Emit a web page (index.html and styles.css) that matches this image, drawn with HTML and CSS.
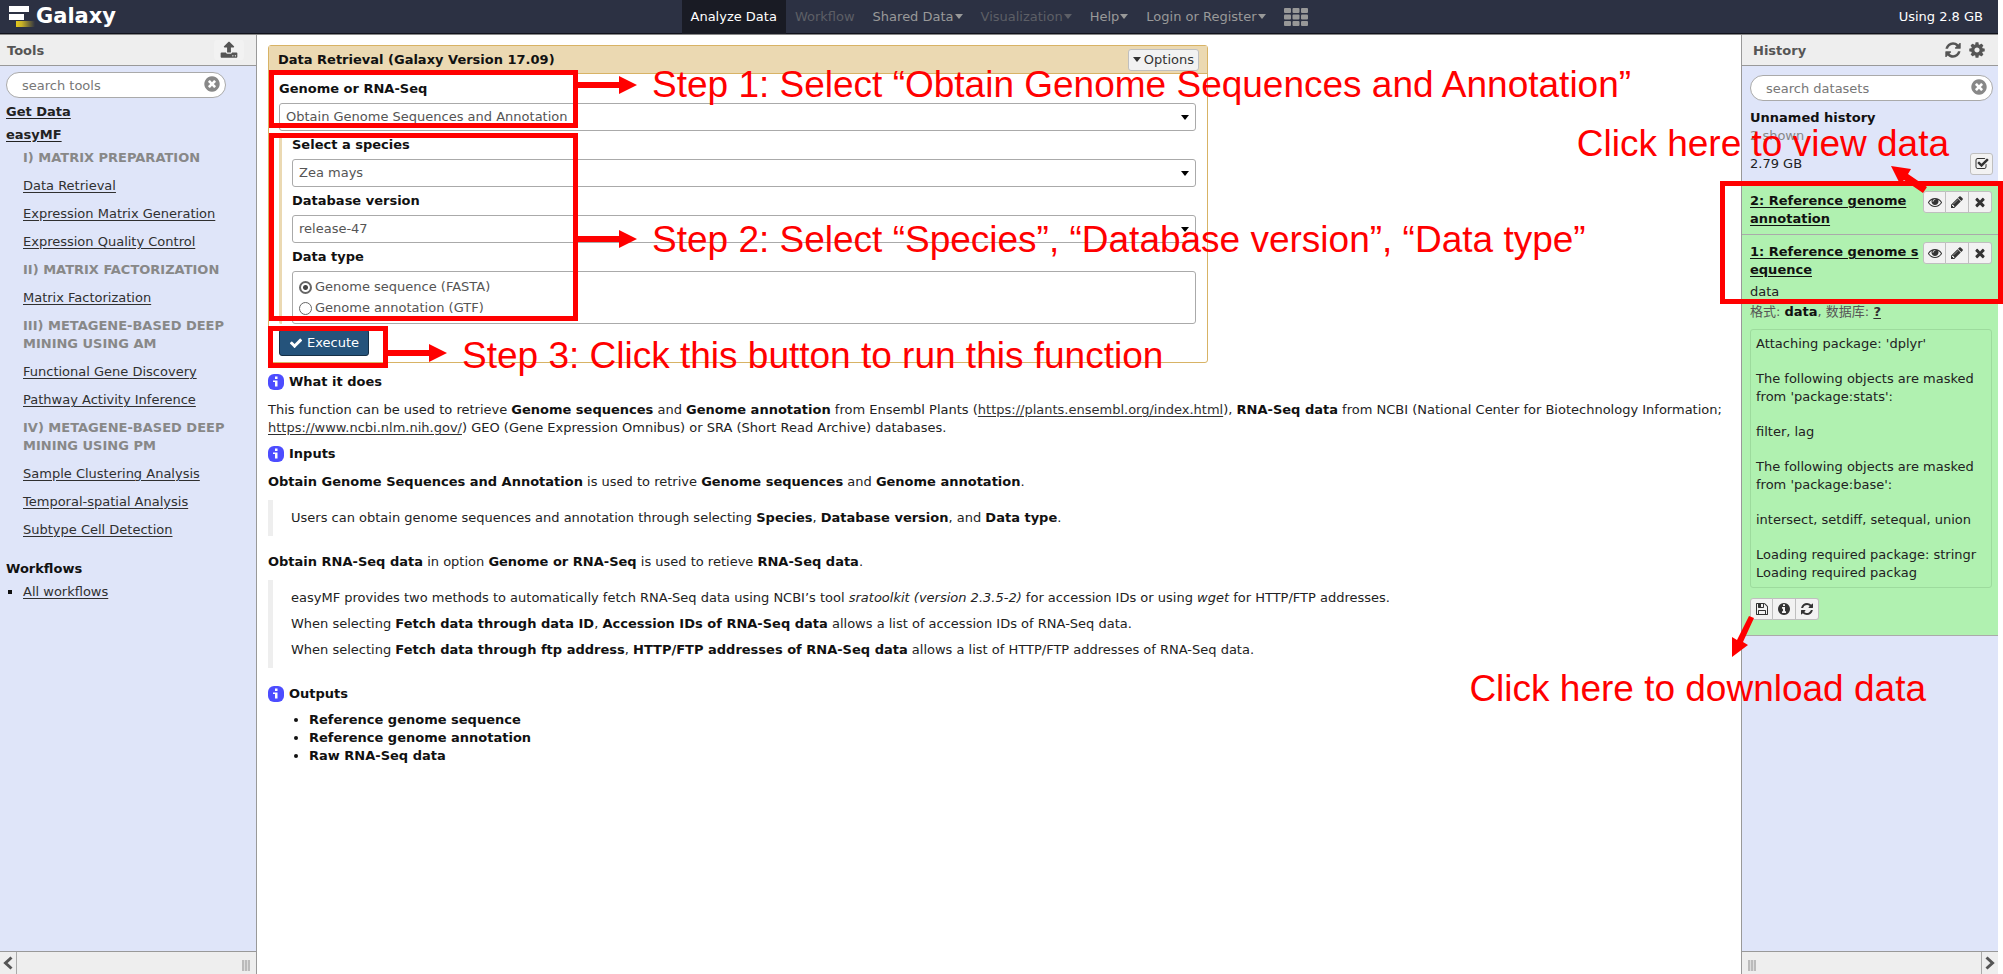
FILE: index.html
```html
<!DOCTYPE html>
<html lang="en">
<head>
<meta charset="utf-8">
<title>Galaxy</title>
<link rel="stylesheet" href="styles.css">
</head>
<body>
<svg class="sprite" aria-hidden="true">
  <defs>
    <symbol id="i-check" viewBox="0 0 1792 1792"><path d="M1671 566q0 40-28 68l-724 724-136 136q-28 28-68 28t-68-28l-136-136-362-362q-28-28-28-68t28-68l136-136q28-28 68-28t68 28l294 295 656-657q28-28 68-28t68 28l136 136q28 28 28 68z"/></symbol>
    <symbol id="i-times" viewBox="0 0 1792 1792"><path d="M1490 1322q0 40-28 68l-136 136q-28 28-68 28t-68-28l-294-294-294 294q-28 28-68 28t-68-28l-136-136q-28-28-28-68t28-68l294-294-294-294q-28-28-28-68t28-68l136-136q28-28 68-28t68 28l294 294 294-294q28-28 68-28t68 28l136 136q28 28 28 68t-28 68l-294 294 294 294q28 28 28 68z"/></symbol>
    <symbol id="i-clear" viewBox="0 0 1792 1792"><path d="M1277 1122q0-26-19-45l-181-181 181-181q19-19 19-45 0-27-19-46l-90-90q-19-19-46-19-26 0-45 19l-181 181-181-181q-19-19-45-19-27 0-46 19l-90 90q-19 19-19 46 0 26 19 45l181 181-181 181q-19 19-19 45 0 27 19 46l90 90q19 19 46 19 26 0 45-19l181-181 181 181q19 19 45 19 27 0 46-19l90-90q19-19 19-46zm387-226q0 209-103 385.500t-279.500 279.500-385.500 103-385.500-103-279.500-279.500-103-385.500 103-385.500 279.500-279.500 385.500-103 385.500 103 279.500 279.500 103 385.500z"/></symbol>
    <symbol id="i-eye" viewBox="0 0 1792 1792"><path d="M1664 960q-152-236-381-353 61 104 61 225 0 185-131.500 316.500t-316.500 131.500-316.500-131.500-131.500-316.500q0-121 61-225-229 117-381 353 133 205 333.500 326.500t434.500 121.500 434.500-121.500 333.500-326.500zm-720-384q0-20-14-34t-34-14q-125 0-214.500 89.500t-89.500 214.500q0 20 14 34t34 14 34-14 14-34q0-86 61-147t147-61q20 0 34-14t14-34zm848 384q0 34-20 69-140 230-376.500 368.500t-499.500 138.500-499.500-139-376.500-368q-20-35-20-69t20-69q140-229 376.500-368t499.500-139 499.500 139 376.500 368q20 35 20 69z"/></symbol>
    <symbol id="i-pencil" viewBox="0 0 1792 1792"><path d="M491 1536l91-91-235-235-91 91v107h128v128h107zm523-928q0-22-22-22-10 0-17 7l-542 542q-7 7-7 17 0 22 22 22 10 0 17-7l542-542q7-7 7-17zm-54-192l416 416-832 832h-416v-416zm683 96q0 53-37 90l-166 166-416-416 166-165q36-38 90-38 53 0 91 38l235 234q37 39 37 91z"/></symbol>
    <symbol id="i-refresh" viewBox="0 0 1792 1792"><path d="M1639 1056q0 5-1 7-64 268-268 434.500t-478 166.500q-146 0-282.500-55t-243.500-157l-129 129q-19 19-45 19t-45-19-19-45v-448q0-26 19-45t45-19h448q26 0 45 19t19 45-19 45l-137 137q71 66 161 102t187 36q134 0 250-65t186-179q11-17 53-117 8-23 30-23h192q13 0 22.500 9.500t9.500 22.500zm25-800v448q0 26-19 45t-45 19h-448q-26 0-45-19t-19-45 19-45l138-138q-148-137-349-137-134 0-250 65t-186 179q-11 17-53 117-8 23-30 23h-199q-13 0-22.500-9.500t-9.500-22.500v-7q65-268 270-434.500t480-166.500q146 0 284 55.500t245 156.500l130-129q19-19 45-19t45 19 19 45z"/></symbol>
    <symbol id="i-cog" viewBox="0 0 1792 1792"><path d="M1152 896q0-106-75-181t-181-75-181 75-75 181 75 181 181 75 181-75 75-181zm512-109v222q0 12-8 23t-20 13l-185 28q-19 54-39 91 35 50 107 138 10 12 10 25t-9 23q-27 37-99 108t-94 71q-12 0-26-9l-138-108q-44 23-91 38-16 136-29 186-7 28-36 28h-222q-14 0-24.500-8.500t-11.500-21.500l-28-184q-49-16-90-37l-141 107q-10 9-25 9-14 0-25-11-126-114-165-168-7-10-7-23 0-12 8-23 15-21 51-66.500t54-70.500q-27-50-41-99l-183-27q-13-2-21-12.500t-8-23.500v-222q0-12 8-23t19-13l186-28q14-46 39-92-40-57-107-138-10-12-10-24 0-10 9-23 26-36 98.500-107.500t94.500-71.500q13 0 26 10l138 107q44-23 91-38 16-136 29-186 7-28 36-28h222q14 0 24.500 8.500t11.500 21.500l28 184q49 16 90 37l142-107q9-9 24-9 13 0 25 10 129 119 165 170 7 8 7 22 0 12-8 23-15 21-51 66.500t-54 70.500q26 50 41 98l183 28q13 2 21 12.500t8 23.500z"/></symbol>
    <symbol id="i-upload" viewBox="0 0 1792 1792"><path d="M1344 1472q0-26-19-45t-45-19-45 19-19 45 19 45 45 19 45-19 19-45zm256 0q0-26-19-45t-45-19-45 19-19 45 19 45 45 19 45-19 19-45zm128-224v320q0 40-28 68t-68 28h-1472q-40 0-68-28t-28-68v-320q0-40 28-68t68-28h427q21 56 70.500 92t110.500 36h256q61 0 110.500-36t70.500-92h427q40 0 68 28t28 68zm-325-648q-17 40-59 40h-256v448q0 26-19 45t-45 19h-256q-26 0-45-19t-19-45v-448h-256q-42 0-59-40-17-39 14-69l448-448q18-19 45-19t45 19l448 448q31 30 14 69z"/></symbol>
    <symbol id="i-save" viewBox="0 0 1792 1792"><path d="M512 1536h768v-384h-768v384zm896 0h128v-896q0-14-10-38.500t-20-34.500l-281-281q-10-10-34-20t-39-10v416q0 40-28 68t-68 28h-576q-40 0-68-28t-28-68v-416h-128v1280h128v-416q0-40 28-68t68-28h832q40 0 68 28t28 68v416zm-384-928v-320q0-13-9.500-22.500t-22.500-9.500h-192q-13 0-22.500 9.500t-9.500 22.500v320q0 13 9.500 22.500t22.500 9.500h192q13 0 22.500-9.500t9.500-22.500zm640 32v928q0 40-28 68t-68 28h-1344q-40 0-68-28t-28-68v-1344q0-40 28-68t68-28h928q40 0 88 20t76 48l280 280q28 28 48 76t20 88z"/></symbol>
    <symbol id="i-info" viewBox="0 0 1792 1792"><path d="M1152 1376v-160q0-14-9-23t-23-9h-96v-512q0-14-9-23t-23-9h-320q-14 0-23 9t-9 23v160q0 14 9 23t23 9h96v320h-96q-14 0-23 9t-9 23v160q0 14 9 23t23 9h448q14 0 23-9t9-23zm-128-896v-160q0-14-9-23t-23-9h-192q-14 0-23 9t-9 23v160q0 14 9 23t23 9h192q14 0 23-9t9-23zm640 416q0 209-103 385.500t-279.500 279.500-385.500 103-385.500-103-279.500-279.500-103-385.500 103-385.500 279.500-279.500 385.500-103 385.500 103 279.500 279.500 103 385.500z"/></symbol>
    <symbol id="i-checked" viewBox="0 0 1792 1792"><path d="M1472 930v318q0 119-84.500 203.500t-203.500 84.500h-832q-119 0-203.500-84.500t-84.500-203.500v-832q0-119 84.500-203.500t203.500-84.500h832q63 0 117 25 15 7 18 23 3 17-9 29l-49 49q-10 10-23 10-3 0-9-2-23-6-45-6h-832q-66 0-113 47t-47 113v832q0 66 47 113t113 47h832q66 0 113-47t47-113v-254q0-13 9-22l64-64q10-10 23-10 6 0 12 3 20 8 20 29zm231-489l-814 814q-24 24-57 24t-57-24l-430-430q-24-24-24-57t24-57l110-110q24-24 57-24t57 24l263 263 647-647q24-24 57-24t57 24l110 110q24 24 24 57t-24 57z"/></symbol>
    <symbol id="i-badge" viewBox="0 0 16 16"><rect x="0" y="0" width="16" height="16" rx="6" fill="#4d4dff"/><path d="M7 2.500h2.500V5H7zM5 6.500h4.500v6h-2.500V8H5z" fill="#fff"/></symbol>
    <symbol id="i-left" viewBox="0 0 10 14"><path d="M8.500 1.500L2.500 7l6 5.500" fill="none" stroke="currentColor" stroke-width="3"/></symbol>
    <symbol id="i-right" viewBox="0 0 10 14"><path d="M1.500 1.500l6 5.500-6 5.500" fill="none" stroke="currentColor" stroke-width="3"/></symbol>
  </defs>
</svg>

<div class="app">
  <header class="masthead">
    <a class="brand" href="#">
      <svg class="brand-mark" viewBox="0 0 26 22" aria-hidden="true">
        <defs><linearGradient id="gold"><stop offset="0" stop-color="#e3c81c"/><stop offset="0.300" stop-color="#c9b226"/><stop offset="1" stop-color="#2c3143"/></linearGradient></defs>
        <rect x="0" y="0" width="20" height="6" fill="#fff"/><rect x="0" y="8" width="15" height="6" fill="#fff"/><rect x="7" y="15" width="19" height="6" fill="url(#gold)"/>
      </svg>
      <span>Galaxy</span>
    </a>
    <nav class="nav">
      <a class="nav-item active" href="#">Analyze Data</a>
      <a class="nav-item disabled" href="#">Workflow</a>
      <a class="nav-item" href="#">Shared Data<i class="caret"></i></a>
      <a class="nav-item disabled" href="#">Visualization<i class="caret"></i></a>
      <a class="nav-item" href="#">Help<i class="caret"></i></a>
      <a class="nav-item" href="#">Login or Register<i class="caret"></i></a>
      <a class="nav-item" href="#" aria-label="Apps"><svg class="apps" viewBox="0 0 24 18" fill="#989898" aria-hidden="true"><rect width="7" height="5" rx="1"/><rect x="8.500" width="7" height="5" rx="1"/><rect x="17" width="7" height="5" rx="1"/><rect y="6.500" width="7" height="5" rx="1"/><rect x="8.500" y="6.500" width="7" height="5" rx="1"/><rect x="17" y="6.500" width="7" height="5" rx="1"/><rect y="13" width="7" height="5" rx="1"/><rect x="8.500" y="13" width="7" height="5" rx="1"/><rect x="17" y="13" width="7" height="5" rx="1"/></svg></a>
    </nav>
    <span class="quota">Using 2.8 GB</span>
  </header>

  <div class="columns">
    <aside class="panel panel-left">
      <div class="panel-head"><h2>Tools</h2><button class="upload" aria-label="Upload"><svg class="icon-lg"><use href="#i-upload"/></svg></button></div>
      <div class="panel-body tools">
        <div class="search"><input type="text" placeholder="search tools" aria-label="search tools"><svg class="icon-lg"><use href="#i-clear"/></svg></div>
        <a class="section" href="#">Get Data</a>
        <a class="section" href="#">easyMF</a>
        <div class="tool-list">
          <h3>I) MATRIX PREPARATION</h3>
          <a href="#">Data Retrieval</a>
          <a href="#">Expression Matrix Generation</a>
          <a href="#">Expression Quality Control</a>
          <h3>II) MATRIX FACTORIZATION</h3>
          <a href="#">Matrix Factorization</a>
          <h3>III) METAGENE-BASED DEEP MINING USING AM</h3>
          <a href="#">Functional Gene Discovery</a>
          <a href="#">Pathway Activity Inference</a>
          <h3>IV) METAGENE-BASED DEEP MINING USING PM</h3>
          <a href="#">Sample Clustering Analysis</a>
          <a href="#">Temporal-spatial Analysis</a>
          <a href="#">Subtype Cell Detection</a>
        </div>
        <h4>Workflows</h4>
        <ul class="workflows"><li><a href="#">All workflows</a></li></ul>
      </div>
      <div class="panel-foot"><button class="collapse" aria-label="Hide tools"><svg class="chev"><use href="#i-left"/></svg></button><span class="grip"></span></div>
    </aside>

    <main class="center">
      <form class="card">
        <div class="card-head"><h1>Data Retrieval (Galaxy Version 17.09)</h1><button type="button" class="options"><i class="caret"></i>Options</button></div>
        <div class="card-body">
          <label class="field-label" for="source">Genome or RNA-Seq</label>
          <div class="select"><select id="source"><option>Obtain Genome Sequences and Annotation</option></select><i class="caret"></i></div>
          <div class="nested">
            <label class="field-label" for="species">Select a species</label>
            <div class="select"><select id="species"><option>Zea mays</option></select><i class="caret"></i></div>
            <label class="field-label" for="version">Database version</label>
            <div class="select"><select id="version"><option>release-47</option></select><i class="caret"></i></div>
            <div class="field-label" id="dtype">Data type</div>
            <div class="radios" role="radiogroup" aria-labelledby="dtype">
              <label><input type="radio" name="dtype" checked>Genome sequence (FASTA)</label>
              <label><input type="radio" name="dtype">Genome annotation (GTF)</label>
            </div>
          </div>
          <button type="button" class="execute"><svg class="icon"><use href="#i-check"/></svg>Execute</button>
        </div>
      </form>

      <article class="help">
        <h2><svg class="badge"><use href="#i-badge"/></svg>What it does</h2>
        <p>This function can be used to retrieve <b>Genome sequences</b> and <b>Genome annotation</b> from Ensembl Plants (<a href="#">https://plants.ensembl.org/index.html</a>), <b>RNA-Seq data</b> from NCBI (National Center for Biotechnology Information; <a href="#">https://www.ncbi.nlm.nih.gov/</a>) GEO (Gene Expression Omnibus) or SRA (Short Read Archive) databases.</p>
        <h2><svg class="badge"><use href="#i-badge"/></svg>Inputs</h2>
        <p><b>Obtain Genome Sequences and Annotation</b> is used to retrive <b>Genome sequences</b> and <b>Genome annotation</b>.</p>
        <blockquote><p>Users can obtain genome sequences and annotation through selecting <b>Species</b>, <b>Database version</b>, and <b>Data type</b>.</p></blockquote>
        <p><b>Obtain RNA-Seq data</b> in option <b>Genome or RNA-Seq</b> is used to retieve <b>RNA-Seq data</b>.</p>
        <blockquote>
          <p>easyMF provides two methods to automatically fetch RNA-Seq data using NCBI’s tool <em>sratoolkit (version 2.3.5-2)</em> for accession IDs or using <em>wget</em> for HTTP/FTP addresses.</p>
          <p>When selecting <b>Fetch data through data ID</b>, <b>Accession IDs of RNA-Seq data</b> allows a list of accession IDs of RNA-Seq data.</p>
          <p>When selecting <b>Fetch data through ftp address</b>, <b>HTTP/FTP addresses of RNA-Seq data</b> allows a list of HTTP/FTP addresses of RNA-Seq data.</p>
        </blockquote>
        <h2><svg class="badge"><use href="#i-badge"/></svg>Outputs</h2>
        <ul><li>Reference genome sequence</li><li>Reference genome annotation</li><li>Raw RNA-Seq data</li></ul>
      </article>
    </main>

    <aside class="panel panel-right">
      <div class="panel-head"><h2>History</h2><div class="head-icons"><button aria-label="Refresh history"><svg class="icon-lg"><use href="#i-refresh"/></svg></button><button aria-label="History options"><svg class="icon-lg"><use href="#i-cog"/></svg></button></div></div>
      <div class="panel-body history">
        <div class="summary">
          <div class="search"><input type="text" placeholder="search datasets" aria-label="search datasets"><svg class="icon-lg"><use href="#i-clear"/></svg></div>
          <h3>Unnamed history</h3>
          <div class="shown">2 shown</div>
          <div class="size"><span>2.79 GB</span><span class="btns"><button aria-label="Select datasets"><svg class="icon"><use href="#i-checked"/></svg></button></span></div>
        </div>
        <section class="dataset">
          <div class="title-row"><a href="#">2: Reference genome annotation</a><span class="btns"><button aria-label="View data"><svg class="icon"><use href="#i-eye"/></svg></button><button aria-label="Edit"><svg class="icon"><use href="#i-pencil"/></svg></button><button aria-label="Delete"><svg class="icon"><use href="#i-times"/></svg></button></span></div>
        </section>
        <section class="dataset">
          <div class="title-row"><a href="#">1:&nbsp;Reference&nbsp;genome&nbsp;sequence</a><span class="btns"><button aria-label="View data"><svg class="icon"><use href="#i-eye"/></svg></button><button aria-label="Edit"><svg class="icon"><use href="#i-pencil"/></svg></button><button aria-label="Delete"><svg class="icon"><use href="#i-times"/></svg></button></span></div>
          <div class="blurb">data</div>
          <div class="meta">格式: <b>data</b>, 数据库: <a href="#">?</a></div>
          <div class="peek">
            <p>Attaching package: 'dplyr'</p>
            <p>The following objects are masked from 'package:stats':</p>
            <p>filter, lag</p>
            <p>The following objects are masked from 'package:base':</p>
            <p>intersect, setdiff, setequal, union</p>
            <p>Loading required package: stringr<br>Loading required packag</p>
          </div>
          <span class="btns"><button aria-label="Download"><svg class="icon"><use href="#i-save"/></svg></button><button aria-label="Details"><svg class="icon"><use href="#i-info"/></svg></button><button aria-label="Run again"><svg class="icon"><use href="#i-refresh"/></svg></button></span>
        </section>
      </div>
      <div class="panel-foot"><span class="grip"></span><button class="collapse" aria-label="Hide history"><svg class="chev"><use href="#i-right"/></svg></button></div>
    </aside>
  </div>
</div>

<div class="callouts">
  <div class="frame frame-source"></div>
  <div class="frame frame-inputs"></div>
  <div class="frame frame-run"></div>
  <div class="frame frame-data"></div>
  <svg class="arrow arrow-source" viewBox="0 0 60 18"><path d="M0 6h42V0l18 9-18 9v-6H0z"/></svg>
  <svg class="arrow arrow-inputs" viewBox="0 0 60 18"><path d="M0 6h42V0l18 9-18 9v-6H0z"/></svg>
  <svg class="arrow arrow-run" viewBox="0 0 60 18"><path d="M0 6h42V0l18 9-18 9v-6H0z"/></svg>
  <svg class="arrow arrow-view" viewBox="0 0 36 28"><path d="M0 0l20 3-3 5 19 13-4 6-19-13-4 4z"/></svg>
  <svg class="arrow arrow-download" viewBox="0 0 24 42"><path d="M1 41V21l5 3L18 0l5 2-11 24 5 3z"/></svg>
  <p class="note note-source">Step 1: Select “Obtain Genome Sequences and Annotation”</p>
  <p class="note note-inputs">Step 2: Select “Species”, “Database version”, “Data type”</p>
  <p class="note note-run">Step 3: Click this button to run this function</p>
  <p class="note note-view">Click here to view data</p>
  <p class="note note-download">Click here to download data</p>
</div>
</body>
</html>
```
FILE: styles.css
```css
* { box-sizing: border-box; }
html, body { height: 100%; }
body {
  margin: 0;
  position: relative;
  overflow: hidden;
  background: #fff;
  color: #222;
  font: 13px/18px "DejaVu Sans", "Noto Sans CJK SC", sans-serif;
}
h1, h2, h3, h4, p, ul { margin: 0; padding: 0; font-size: 13px; }
a { color: #303030; text-underline-offset: 2px; }
b { color: #111; }
button { font: inherit; color: inherit; cursor: pointer; }
.sprite { position: absolute; width: 0; height: 0; }
.icon { width: 14px; height: 14px; fill: currentColor; display: block; }
.icon-lg { width: 18px; height: 18px; fill: currentColor; display: block; }
.caret { display: inline-block; border: 4px solid transparent; border-top: 5px solid currentColor; border-bottom: 0; vertical-align: 1px; }

.app { height: 100%; padding-right: 5px; display: flex; flex-direction: column; }

/* top bar */
.masthead {
  flex: none;
  height: 35px;
  display: grid;
  grid-template-columns: 1fr auto 1fr;
  background: #2c3143;
  border-bottom: 1px solid #888;
  box-shadow: inset 0 -1px #10121c;
}
.brand { display: flex; align-items: center; gap: 1px; padding-left: 9px; color: #fff; font-size: 21px; font-weight: bold; text-decoration: none; }
.brand span { padding-bottom: 3px; }
.brand-mark { width: 26px; height: 22px; }
.nav { display: flex; }
.nav-item { display: flex; align-items: center; gap: 1px; padding: 0 9px 1px; color: #999; text-decoration: none; }
.nav-item.active { background: #191b24; color: #fff; }
.nav-item.disabled { color: #5d5f66; }
.apps { width: 24px; height: 18px; }
.quota { justify-self: end; align-self: center; padding: 0 15px 1px 0; color: #fff; }

/* panels */
.columns { flex: 1; min-height: 0; display: grid; grid-template-columns: 257px 1fr 257px; }
.panel { display: flex; flex-direction: column; min-height: 0; background: #dfe5f9; }
.panel-left { border-right: 1px solid #999; }
.panel-right { border-left: 1px solid #999; }
.panel-head { flex: none; height: 31px; display: flex; align-items: center; justify-content: space-between; padding: 0 12px 0 7px; background: #eee; border-bottom: 1px solid #999; color: #555; }
.panel-head h2 { padding-top: 2px; }
.panel-right .panel-head { padding-left: 11px; }
.panel-head button { border: 0; padding: 0; background: none; }
.panel-head .upload { padding: 1px 6px; border-radius: 3px; background: #f2f2f2; }
.head-icons { display: flex; gap: 6px; }
.panel-body { flex: 1; min-height: 0; overflow: hidden; }
.panel-foot { flex: none; height: 23px; display: flex; align-items: stretch; justify-content: space-between; background: #eee; border-top: 1px solid #999; }
.collapse { width: 17px; padding: 0; border: 0; border-right: 1px solid #aaa; background: none; color: #555; display: grid; place-items: center; }
.panel-right .collapse { border-right: 0; border-left: 1px solid #aaa; }
.chev { width: 10px; height: 14px; }
.grip { width: 8px; height: 11px; margin: 8px 6px 0; background: repeating-linear-gradient(90deg, #bbb 0 2px, #ddd 2px 3px); }
.search { position: relative; }
.search input { width: 100%; height: 26px; padding: 0 32px 0 15px; border: 1px solid #aaa; border-radius: 13px; background: #fff; font: inherit; color: #555; display: block; }
.search input::placeholder { color: #777; opacity: 1; }
.search svg { position: absolute; right: 5px; top: 3px; color: #888; }

.tools { padding: 6px 6px 0; }
.tools .search { width: 220px; margin-bottom: 5px; }
.section { display: block; margin-bottom: 5px; font-weight: bold; color: #222; }
.tool-list { padding: 0 10px 0 17px; display: grid; gap: 10px; justify-items: start; }
.tool-list h3 { color: #888; }
.tools h4 { margin: 21px 0 5px; color: #111; }
.workflows { list-style: square; padding-left: 17px; }
.workflows li::marker { color: #111; }

/* tool form */
.center { padding: 10px 10px 10px 11px; min-width: 0; overflow: hidden; }
.card { max-width: 940px; border: 1px solid #d8b365; border-radius: 3px; }
.card-head { height: 28px; display: flex; align-items: center; justify-content: space-between; padding: 0 8px 0 9px; background: #ebd9b2; border-bottom: 1px solid #d8b365; color: #111; }
.options { height: 22px; padding: 0 4px; display: flex; align-items: center; gap: 3px; border: 1px solid #bfbfbf; border-radius: 3px; background: #f2f2f2; color: #333; }
.card-body { padding: 6px 11px 6px 10px; }
.field-label { display: block; padding-bottom: 5px; color: #111; font-weight: bold; }
.select { position: relative; margin-bottom: 5px; }
.select select { appearance: none; width: 100%; height: 28px; padding: 0 24px 0 6px; border: 1px solid #aaa; border-radius: 3px; background: #fff; color: #555; font: inherit; display: block; }
.select .caret { position: absolute; right: 7px; top: 12px; color: #000; }
.nested { padding-left: 10px; border-left: 3px solid #ebd9b2; border-radius: 2px; }
.radios { min-height: 52px; padding: 6px; border: 1px solid #aaa; border-radius: 3px; display: grid; gap: 3px; color: #555; }
.radios label { display: flex; align-items: center; gap: 3px; }
.radios input { appearance: none; width: 13px; height: 13px; margin: 0; border: 1px solid #666; border-radius: 50%; }
.radios input:checked { border-width: 2px; background: radial-gradient(#444 2px, #fff 3px); }
.execute { height: 27px; margin-top: 5px; padding: 0 9px; display: flex; align-items: center; gap: 4px; border: 1px solid #152f45; border-radius: 3px; background: #25537b; color: #fff; }

/* help text */
.help { padding-top: 10px; }
.help h2 { display: flex; align-items: center; gap: 5px; color: #111; }
.help > p { margin: 10px 0 8px; }
.badge { width: 16px; height: 16px; }
blockquote { margin: 9px 0 17px; padding: 9px 18px; border-left: 5px solid #eee; }
blockquote p + p { margin-top: 8px; }
blockquote + h2 { margin-top: 17px; }
.help ul { margin-top: 8px; padding-left: 41px; font-weight: bold; color: #111; }

/* history */
.summary { padding: 9px 5px 9px 8px; }
.history h3 { margin-top: 8px; color: #111; }
.shown { color: #888; }
.size { display: flex; justify-content: space-between; align-items: center; margin-top: 8px; }
.btns { display: flex; flex: none; }
.btns button { width: 23px; height: 22px; padding: 0; display: grid; place-items: center; border: 1px solid #bfbfbf; background: #f2f2f2; color: #333; }
.btns button + button { border-left: 0; }
.btns button:first-child { border-radius: 3px 0 0 3px; }
.btns button:last-child { border-radius: 0 3px 3px 0; }
.btns button:only-child { border-radius: 3px; }
.dataset { padding: 7px 6px 6px 8px; background: #b0f1b0; border-bottom: 1px solid #aaa; }
.dataset:last-child { padding-bottom: 15px; }
.title-row { display: flex; gap: 3px; align-items: flex-start; justify-content: space-between; }
.title-row a { min-width: 0; padding-top: 1px; color: #111; font-weight: bold; overflow-wrap: anywhere; }
.blurb { margin-top: 4px; }
.meta { margin-top: 2px; color: #555; }
.meta a { font-weight: bold; }
.peek { margin: 8px 0 10px; padding: 5px; display: grid; gap: 17px; border: 1px solid #9ddb9d; border-radius: 3px; }

/* tutorial callouts drawn over the page */
.callouts { position: absolute; inset: 0; overflow: hidden; pointer-events: none; }
.callouts > * { position: absolute; }
.frame { border: 5px solid #f00; }
.frame-source { left: 269px; top: 70px; width: 309px; height: 58px; }
.frame-inputs { left: 269px; top: 133px; width: 309px; height: 188px; }
.frame-run { left: 268px; top: 326px; width: 120px; height: 42px; }
.frame-data { right: 0; top: 181px; width: 283px; height: 123px; }
.arrow { fill: #f00; }
.arrow-source, .arrow-inputs, .arrow-run { width: 60px; height: 18px; }
.arrow-source { left: 577px; top: 76px; }
.arrow-inputs { left: 577px; top: 230px; }
.arrow-run { left: 387px; top: 344px; }
.arrow-view { right: 76px; top: 166px; width: 36px; height: 28px; }
.arrow-download { right: 248px; top: 616px; width: 24px; height: 42px; }
.note { color: #f00; font: 37px/42px "Liberation Sans", Arial, sans-serif; white-space: nowrap; }
.note-source { left: 652px; top: 64px; }
.note-inputs { left: 652px; top: 219px; }
.note-run { left: 462px; top: 335px; }
.note-view { right: 54px; top: 123px; }
.note-download { right: 77px; top: 668px; }
```
